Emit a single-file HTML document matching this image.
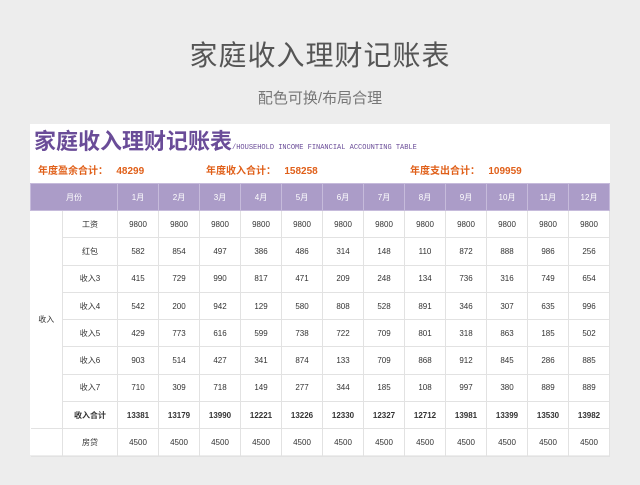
<!DOCTYPE html>
<html><head><meta charset="utf-8"><style>
body{margin:0;width:640px;height:485px;background:#ededed;font-family:"Liberation Sans","Noto Sans CJK SC",sans-serif;position:relative;overflow:hidden}
.t1{position:absolute;top:34px;width:640px;text-align:center;font-size:28px;color:#555;letter-spacing:1px}
.t2{position:absolute;top:87px;width:640px;text-align:center;font-size:15px;color:#777}
.card{position:absolute;left:30px;top:124px;width:580px;height:331px;background:#fff}
.ct{position:absolute;left:4px;top:0px;font-size:22px;font-weight:bold;color:#6a4c98;white-space:nowrap}
.ct span{font-family:"Liberation Mono",monospace;font-size:7px;font-weight:normal;color:#6a4c98}
.s{position:absolute;top:38px;font-size:10px;font-weight:bold;color:#e0601a}
table{position:absolute;left:0;top:59px;border-collapse:collapse;font-size:8px;color:#333}
td{border:1px solid #e2e2e2;text-align:center;height:26.3px;padding:0}
tr.h td{background:#ab9cc8;color:#fff;border-color:#c6bbdb;height:26px}
tr.b td{font-weight:bold}
</style></head><body>
<div class="t1">家庭收入理财记账表</div>
<div class="t2">配色可换/布局合理</div>
<div class="card">
<div class="ct">家庭收入理财记账表<span>/HOUSEHOLD INCOME FINANCIAL ACCOUNTING TABLE</span></div>
<div class="s" style="left:8px">年度盈余合计：&nbsp;&nbsp;&nbsp;48299</div>
<div class="s" style="left:176px">年度收入合计：&nbsp;&nbsp;&nbsp;158258</div>
<div class="s" style="left:380px">年度支出合计：&nbsp;&nbsp;&nbsp;109959</div>
<table>
<colgroup><col style="width:32px"><col style="width:55px"><col span="12" style="width:41px"></colgroup>
<tr class="h"><td colspan="2">月份</td><td>1月</td><td>2月</td><td>3月</td><td>4月</td><td>5月</td><td>6月</td><td>7月</td><td>8月</td><td>9月</td><td>10月</td><td>11月</td><td>12月</td></tr>
<tr><td rowspan="8" style="border-left:none">收入</td><td>工资</td><td>9800</td><td>9800</td><td>9800</td><td>9800</td><td>9800</td><td>9800</td><td>9800</td><td>9800</td><td>9800</td><td>9800</td><td>9800</td><td>9800</td></tr>
<tr><td>红包</td><td>582</td><td>854</td><td>497</td><td>386</td><td>486</td><td>314</td><td>148</td><td>110</td><td>872</td><td>888</td><td>986</td><td>256</td></tr>
<tr><td>收入3</td><td>415</td><td>729</td><td>990</td><td>817</td><td>471</td><td>209</td><td>248</td><td>134</td><td>736</td><td>316</td><td>749</td><td>654</td></tr>
<tr><td>收入4</td><td>542</td><td>200</td><td>942</td><td>129</td><td>580</td><td>808</td><td>528</td><td>891</td><td>346</td><td>307</td><td>635</td><td>996</td></tr>
<tr><td>收入5</td><td>429</td><td>773</td><td>616</td><td>599</td><td>738</td><td>722</td><td>709</td><td>801</td><td>318</td><td>863</td><td>185</td><td>502</td></tr>
<tr><td>收入6</td><td>903</td><td>514</td><td>427</td><td>341</td><td>874</td><td>133</td><td>709</td><td>868</td><td>912</td><td>845</td><td>286</td><td>885</td></tr>
<tr><td>收入7</td><td>710</td><td>309</td><td>718</td><td>149</td><td>277</td><td>344</td><td>185</td><td>108</td><td>997</td><td>380</td><td>889</td><td>889</td></tr>
<tr class="b"><td>收入合计</td><td>13381</td><td>13179</td><td>13990</td><td>12221</td><td>13226</td><td>12330</td><td>12327</td><td>12712</td><td>13981</td><td>13399</td><td>13530</td><td>13982</td></tr>
<tr><td style="border-left:none"></td><td>房贷</td><td>4500</td><td>4500</td><td>4500</td><td>4500</td><td>4500</td><td>4500</td><td>4500</td><td>4500</td><td>4500</td><td>4500</td><td>4500</td><td>4500</td></tr>
</table>
</div>
</body></html>
